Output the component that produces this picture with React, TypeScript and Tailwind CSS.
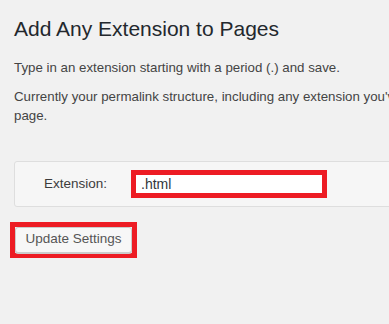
export default function App() {
  return (
    <div className="w-[389px] h-[324px] overflow-hidden bg-[#f1f1f1] pl-[14px] pt-[16px] font-['Liberation_Sans',Arial,sans-serif] text-[#444]">
      <h1 className="text-[21px] leading-[26px] text-[#23282d] whitespace-nowrap">Add Any Extension to Pages</h1>

      <p className="mt-[16px] text-[13.3px] leading-[19px] whitespace-nowrap">
        Type in an extension starting with a period (.) and save.
      </p>
      <p className="mt-[10px] text-[13.3px] leading-[19px]">
        <span className="block whitespace-nowrap">
          Currently your permalink structure, including any extension you've added, is applied to every
        </span>
        <span className="block">page.</span>
      </p>

      <div className="mt-[36px] w-[420px] h-[46px] flex items-center bg-[#f6f6f6] border border-[#dedede] rounded-l-[3px]">
        <label className="ml-[29px] w-[87px] text-[13.5px] text-[#3c3c3c]">Extension:</label>
        <div className="w-[196px] h-[28px] border-[5px] border-[#ed1c24] bg-white flex items-center pl-[5px]">
          <span className="text-[14px] text-[#32373c]">.html</span>
        </div>
      </div>

      <div className="mt-[15px] -ml-[4px] w-[127px] h-[36px] border-[5px] border-[#ed1c24] flex">
        <button className="w-[117px] h-[26px] bg-[#f7f7f7] border border-[#cccccc] rounded-[3px] shadow-[0_1px_0_#cccccc] text-[13.5px] text-[#555] pb-[1px]">
          Update Settings
        </button>
      </div>
    </div>
  );
}
